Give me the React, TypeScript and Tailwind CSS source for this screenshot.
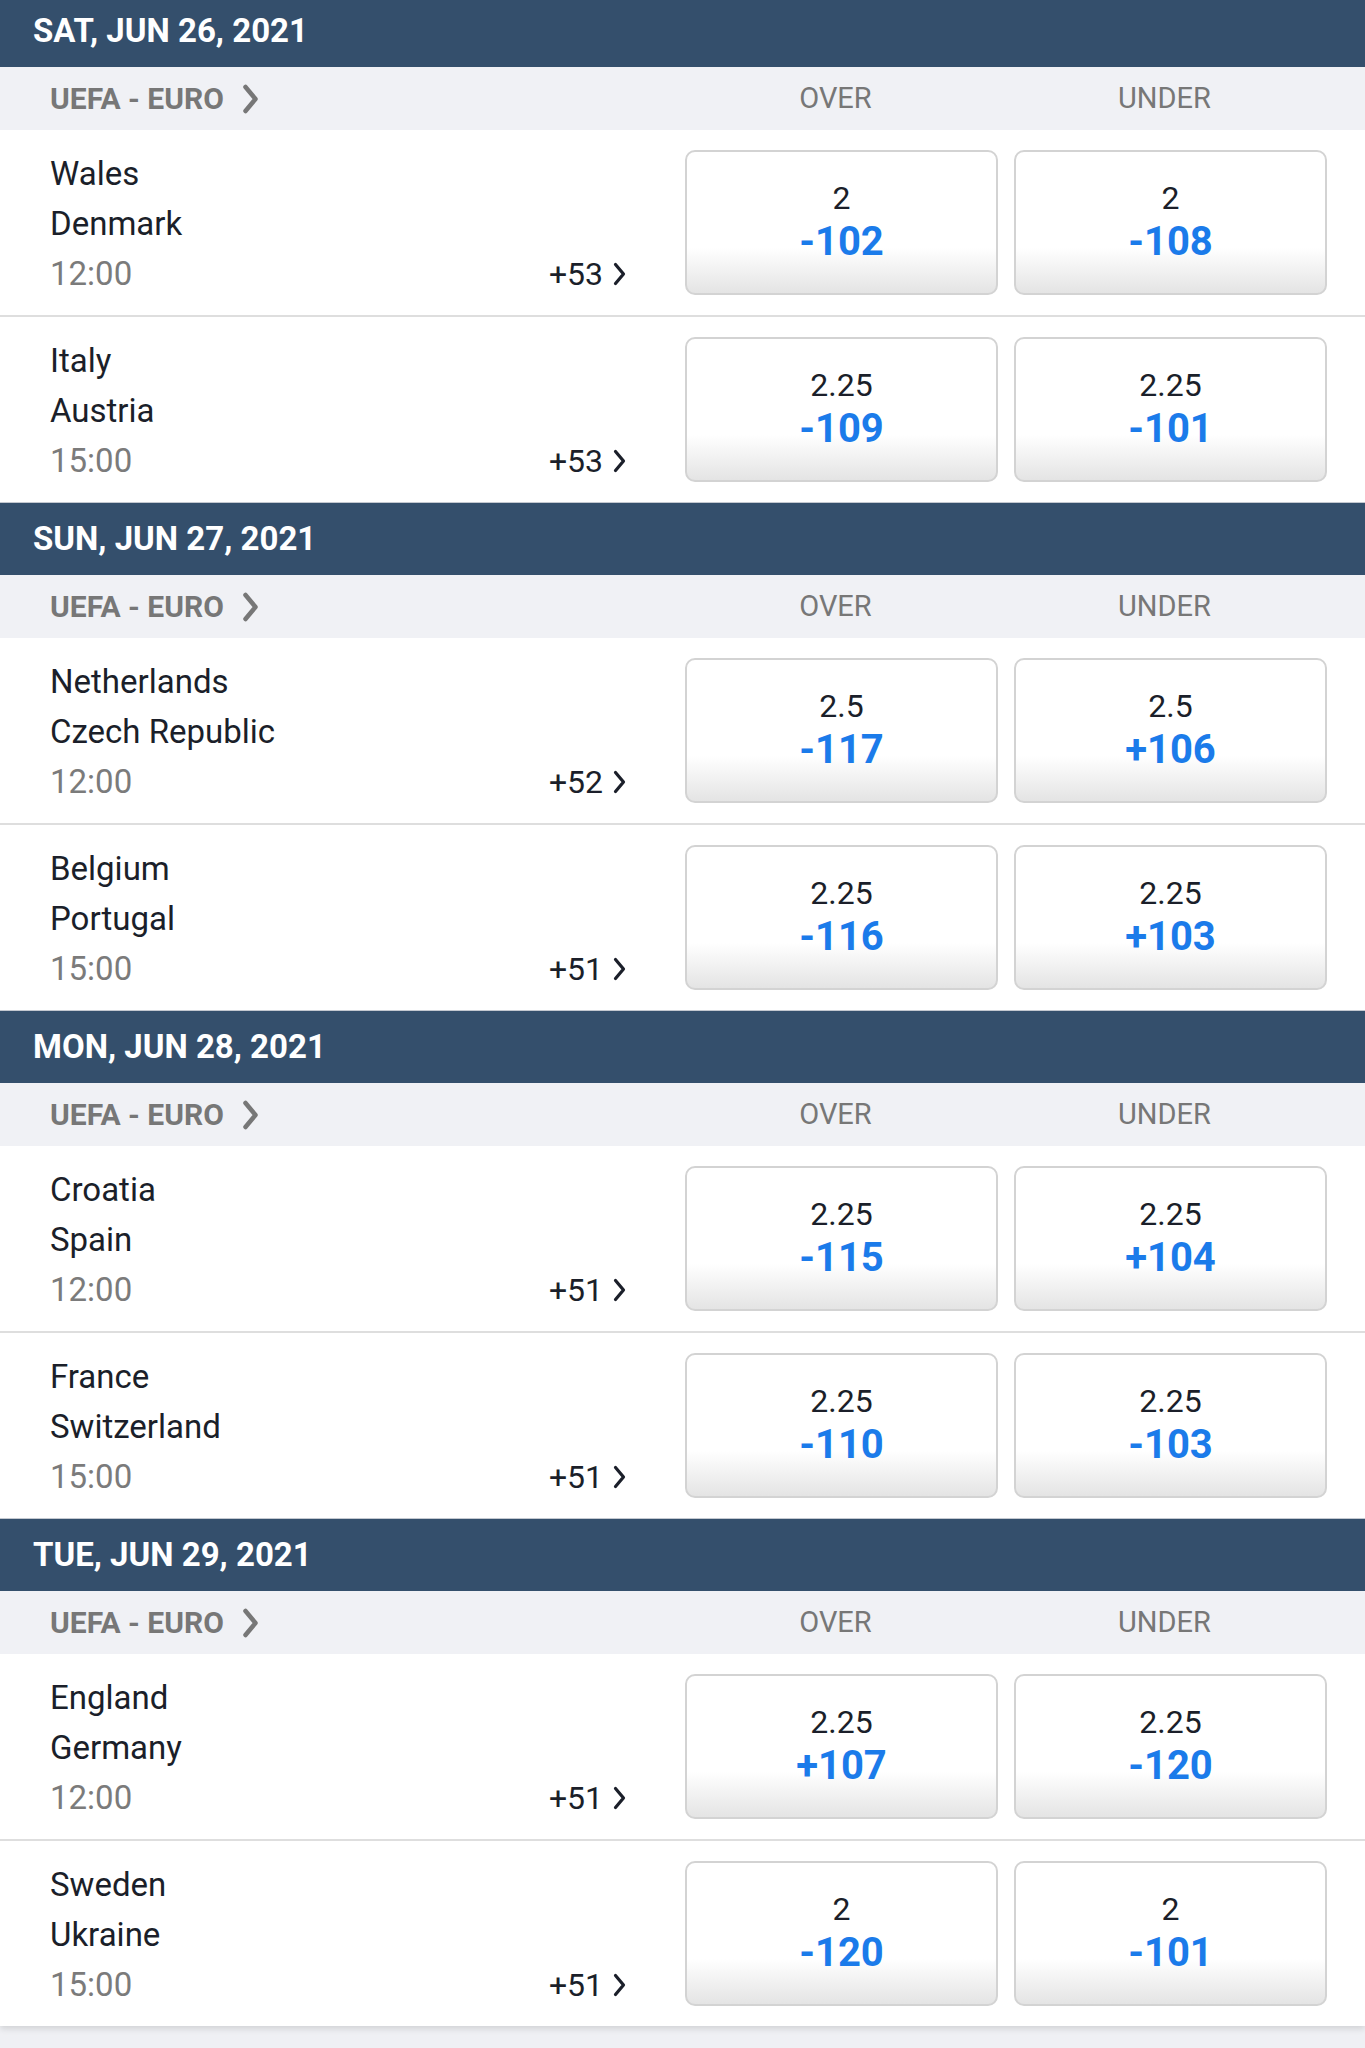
import React from 'react';

interface Match {
  home: string;
  away: string;
  time: string;
  more: string;
  over: [string, string];
  under: [string, string];
}

interface Day {
  date: string;
  league: string;
  matches: Match[];
}

const days: Day[] = [
  {
    date: 'SAT, JUN 26, 2021',
    league: 'UEFA - EURO',
    matches: [
      { home: 'Wales', away: 'Denmark', time: '12:00', more: '+53', over: ['2', '-102'], under: ['2', '-108'] },
      { home: 'Italy', away: 'Austria', time: '15:00', more: '+53', over: ['2.25', '-109'], under: ['2.25', '-101'] },
    ],
  },
  {
    date: 'SUN, JUN 27, 2021',
    league: 'UEFA - EURO',
    matches: [
      { home: 'Netherlands', away: 'Czech Republic', time: '12:00', more: '+52', over: ['2.5', '-117'], under: ['2.5', '+106'] },
      { home: 'Belgium', away: 'Portugal', time: '15:00', more: '+51', over: ['2.25', '-116'], under: ['2.25', '+103'] },
    ],
  },
  {
    date: 'MON, JUN 28, 2021',
    league: 'UEFA - EURO',
    matches: [
      { home: 'Croatia', away: 'Spain', time: '12:00', more: '+51', over: ['2.25', '-115'], under: ['2.25', '+104'] },
      { home: 'France', away: 'Switzerland', time: '15:00', more: '+51', over: ['2.25', '-110'], under: ['2.25', '-103'] },
    ],
  },
  {
    date: 'TUE, JUN 29, 2021',
    league: 'UEFA - EURO',
    matches: [
      { home: 'England', away: 'Germany', time: '12:00', more: '+51', over: ['2.25', '+107'], under: ['2.25', '-120'] },
      { home: 'Sweden', away: 'Ukraine', time: '15:00', more: '+51', over: ['2', '-120'], under: ['2', '-101'] },
    ],
  },
];

const Chevron = ({ className, color, width }: { className: string; color: string; width: number }) => (
  <svg viewBox="0 0 18 30" className={className} fill="none">
    <polyline points="4,3 14,15 4,27" stroke={color} strokeWidth={width} strokeLinecap="round" strokeLinejoin="round" />
  </svg>
);

const OddsButton = ({ line, price }: { line: string; price: string }) => (
  <button
    type="button"
    className="w-[313px] h-[145px] rounded-[10px] border-2 border-[#d3d3d3] bg-linear-to-b from-white from-[68%] to-[#e4e4e4] flex flex-col items-center justify-center pb-[6px]"
  >
    <span className="text-[32px] leading-[43px] text-[#1b1f2a]">{line}</span>
    <span className="text-[40px] leading-[43px] font-bold text-[#1b7bea]">{price}</span>
  </button>
);

const MatchRow = ({ match, last }: { match: Match; last: boolean }) => (
  <div className={`flex items-center ${last ? 'h-[185px]' : 'h-[187px] border-b-2 border-[#dedede]'}`}>
    <div className="flex-1 self-stretch pl-[50px] pr-[58px] pt-[19px]">
      <div className="text-[33px] leading-[50px] text-[#1b1f2a]">{match.home}</div>
      <div className="text-[33px] leading-[50px] text-[#1b1f2a]">{match.away}</div>
      <div className="flex items-center justify-between leading-[50px]">
        <span className="text-[33px] text-[#7b7b7b]">{match.time}</span>
        <span className="flex items-center gap-[9px] text-[32px] text-[#1b1f2a]">
          {match.more}
          <Chevron className="w-[15px] h-[24px]" color="#1b1f2a" width={4} />
        </span>
      </div>
    </div>
    <div className="flex gap-[16px] pr-[38px]">
      <OddsButton line={match.over[0]} price={match.over[1]} />
      <OddsButton line={match.under[0]} price={match.under[1]} />
    </div>
  </div>
);

export default function App() {
  return (
    <div className="min-h-screen bg-[#eff0f4] font-['Roboto','Liberation_Sans',sans-serif] overflow-hidden">
      <div className="-mt-[6px] bg-white shadow-[0_3px_6px_rgba(0,0,0,0.12)]">
        {days.map((day) => (
          <section key={day.date}>
            <div className="h-[73px] bg-[#344f6c] border-t border-[#c3c8d0] flex items-center px-[33px] text-white text-[33px] font-bold">
              {day.date}
            </div>
            <div className="h-[63px] bg-[#f0f1f5] flex items-center">
              <div className="flex-1 flex items-center gap-[17px] pl-[50px]">
                <span className="text-[30px] font-bold text-[#777777]">{day.league}</span>
                <Chevron className="w-[19px] h-[30px]" color="#777777" width={4.5} />
              </div>
              <div className="flex gap-[16px] pr-[44px]">
                <span className="w-[313px] text-center text-[29px] text-[#777777]">OVER</span>
                <span className="w-[313px] text-center text-[29px] text-[#777777]">UNDER</span>
              </div>
            </div>
            {day.matches.map((m, i) => (
              <MatchRow key={m.home} match={m} last={i === day.matches.length - 1} />
            ))}
          </section>
        ))}
      </div>
    </div>
  );
}
